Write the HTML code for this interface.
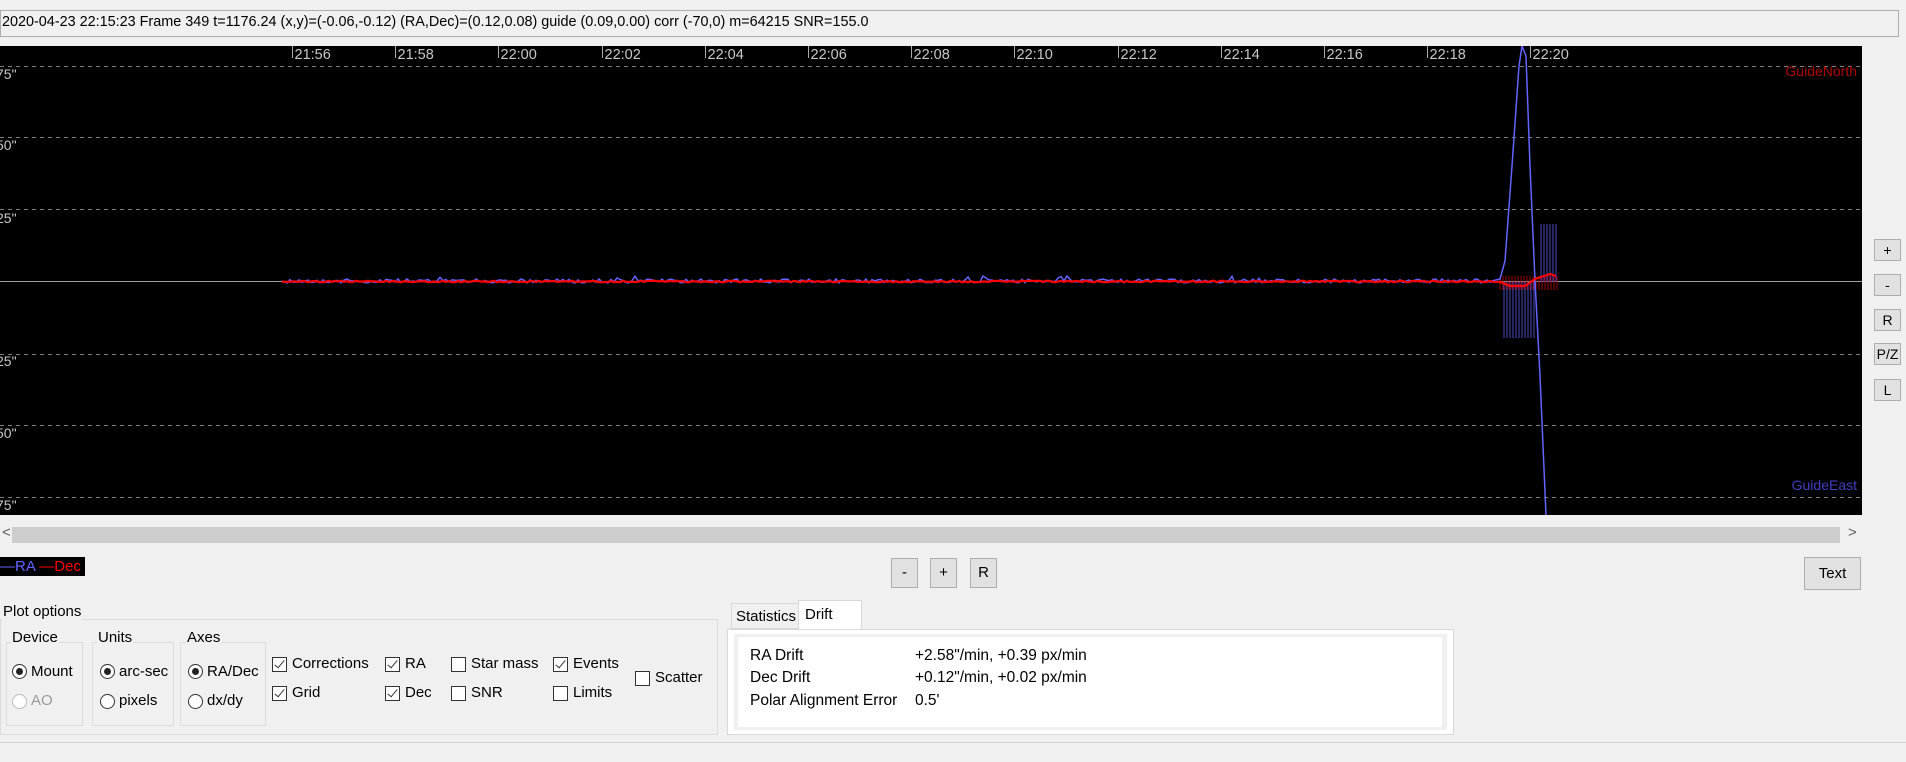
<!DOCTYPE html>
<html><head><meta charset="utf-8"><style>
*{box-sizing:border-box}
body{margin:0;width:1906px;height:762px;background:#f0f0f0;font-family:"Liberation Sans",sans-serif;font-size:15px;color:#000;position:relative;overflow:hidden}
.a{position:absolute;white-space:nowrap}
.btn{position:absolute;background:#e1e1e1;border:1px solid #adadad;text-align:center;font-size:15px}
.gb{position:absolute;border:1px solid #dcdcdc}
.gt{position:absolute;background:#f0f0f0;padding:0 1px;font-size:15px}
.rb{position:absolute;width:15px;height:15px;border:1px solid #333;border-radius:50%;background:#fff}
.rb.on::after{content:"";position:absolute;left:3px;top:3px;width:7px;height:7px;border-radius:50%;background:#222}
.cb{position:absolute;width:15px;height:15px;border:1px solid #333;background:#fff}
.cb.on::after{content:"";position:absolute;left:4px;top:0px;width:4px;height:9px;border:solid #333;border-width:0 1.5px 1.5px 0;transform:rotate(40deg)}
</style></head><body>
<div class="a" style="left:0;top:10px;width:1899px;height:27px;border:1px solid #adadad;background:#f0f0f0"></div>
<div class="a" style="left:2px;top:14px;font-size:14.4px">2020-04-23 22:15:23 Frame 349 t=1176.24 (x,y)=(-0.06,-0.12) (RA,Dec)=(0.12,0.08) guide (0.09,0.00) corr (-70,0) m=64215 SNR=155.0</div>

<svg class="a" style="left:0;top:46px" width="1862" height="469" viewBox="0 0 1862 469">
<rect width="1862" height="469" fill="#000"/>
<g stroke="#808080" stroke-dasharray="4,4" stroke-width="1">
<line x1="0" y1="20.5" x2="1862" y2="20.5"/><line x1="0" y1="91.5" x2="1862" y2="91.5"/><line x1="0" y1="163.5" x2="1862" y2="163.5"/>
<line x1="0" y1="308.5" x2="1862" y2="308.5"/><line x1="0" y1="379.5" x2="1862" y2="379.5"/><line x1="0" y1="451.5" x2="1862" y2="451.5"/>
</g>
<line x1="0" y1="235.5" x2="1862" y2="235.5" stroke="#a0a0a0"/>
<g fill="#c8c8c8" font-family="Liberation Sans" font-size="14">
<text x="-4" y="33">75"</text><text x="-4" y="104">50"</text><text x="-4" y="177">25"</text>
<text x="-4" y="320">25"</text><text x="-4" y="392">50"</text><text x="-4" y="464">75"</text>
</g>
<g id="ticks" stroke="#aaa" fill="#c8c8c8" font-family="Liberation Sans" font-size="14.5"></g>
<text x="1857" y="30" text-anchor="end" fill="#b00000" font-family="Liberation Sans" font-size="14">GuideNorth</text>
<text x="1857" y="444" text-anchor="end" fill="#4040c0" font-family="Liberation Sans" font-size="14">GuideEast</text>
<g id="bars"></g>
<path id="ra" fill="none" stroke="#6464ff" stroke-width="1.5" d="M282 235 L1498 235 L1505 215 L1512 120 L1519 20 L1522 0 L1526 10 L1530 120 L1535 235 L1540 330 L1546 469"/>
<path id="dec" fill="none" stroke="#ff0000" stroke-width="2.2" d="M282 236 L1500 236 L1510 240 L1525 240 L1535 233 L1550 228 L1556 230"/>
</svg>

<div class="a" style="left:0;top:526px;width:1862px;height:17px;background:#f0f0f0"></div>
<div class="a" style="left:12px;top:527px;width:1828px;height:16px;background:#cdcdcd"></div>
<div class="a" style="left:2px;top:524px;color:#606060;font-size:15px">&lt;</div>
<div class="a" style="left:1848px;top:524px;color:#606060;font-size:15px">&gt;</div>

<div class="a" style="left:0;top:557px;width:85px;height:19px;background:#000;font-size:15px;line-height:19px"><span style="color:#6464ff">—RA</span> <span style="color:#ff0000">—Dec</span></div>

<div class="btn" style="left:891px;top:558px;width:27px;height:30px;line-height:28px">-</div>
<div class="btn" style="left:930px;top:558px;width:27px;height:30px;line-height:28px">+</div>
<div class="btn" style="left:970px;top:558px;width:27px;height:30px;line-height:28px">R</div>
<div class="btn" style="left:1804px;top:557px;width:57px;height:33px;line-height:31px">Text</div>

<div class="btn" style="left:1874px;top:239px;width:27px;height:22px;line-height:20px;font-size:14px">+</div>
<div class="btn" style="left:1874px;top:274px;width:27px;height:22px;line-height:20px;font-size:14px">-</div>
<div class="btn" style="left:1874px;top:309px;width:27px;height:22px;line-height:20px;font-size:14px">R</div>
<div class="btn" style="left:1874px;top:343px;width:27px;height:22px;line-height:20px;font-size:14px">P/Z</div>
<div class="btn" style="left:1874px;top:379px;width:27px;height:22px;line-height:20px;font-size:14px">L</div>

<div class="gb" style="left:0;top:619px;width:718px;height:116px"></div>
<div class="gt" style="left:2px;top:603px">Plot options</div>
<div class="gb" style="left:6px;top:642px;width:77px;height:84px"></div><div class="gt" style="left:11px;top:629px">Device</div>
<div class="gb" style="left:92px;top:642px;width:82px;height:84px"></div><div class="gt" style="left:97px;top:629px">Units</div>
<div class="gb" style="left:180px;top:642px;width:86px;height:84px"></div><div class="gt" style="left:186px;top:629px">Axes</div>

<div class="rb on" style="left:12px;top:664px"></div><div class="a" style="left:31px;top:663px">Mount</div>
<div class="rb" style="left:12px;top:694px;border-color:#bbb"></div><div class="a" style="left:31px;top:692px;color:#9a9a9a">AO</div>
<div class="rb on" style="left:100px;top:664px"></div><div class="a" style="left:119px;top:663px">arc-sec</div>
<div class="rb" style="left:100px;top:694px"></div><div class="a" style="left:119px;top:692px">pixels</div>
<div class="rb on" style="left:188px;top:664px"></div><div class="a" style="left:207px;top:663px">RA/Dec</div>
<div class="rb" style="left:188px;top:694px"></div><div class="a" style="left:207px;top:692px">dx/dy</div>

<div class="cb on" style="left:272px;top:657px"></div><div class="a" style="left:292px;top:655px">Corrections</div>
<div class="cb on" style="left:272px;top:686px"></div><div class="a" style="left:292px;top:684px">Grid</div>
<div class="cb on" style="left:385px;top:657px"></div><div class="a" style="left:405px;top:655px">RA</div>
<div class="cb on" style="left:385px;top:686px"></div><div class="a" style="left:405px;top:684px">Dec</div>
<div class="cb" style="left:451px;top:657px"></div><div class="a" style="left:471px;top:655px">Star mass</div>
<div class="cb" style="left:451px;top:686px"></div><div class="a" style="left:471px;top:684px">SNR</div>
<div class="cb on" style="left:553px;top:657px"></div><div class="a" style="left:573px;top:655px">Events</div>
<div class="cb" style="left:553px;top:686px"></div><div class="a" style="left:573px;top:684px">Limits</div>
<div class="cb" style="left:635px;top:671px"></div><div class="a" style="left:655px;top:669px">Scatter</div>

<div class="a" style="left:731px;top:603px;width:68px;height:26px;border:1px solid #d9d9d9;background:#f0f0f0;padding:4px 4px;font-size:15px">Statistics</div>
<div class="a" style="left:798px;top:600px;width:64px;height:30px;border:1px solid #d9d9d9;border-bottom:none;background:#fff;padding:5px 6px;font-size:15px">Drift</div>
<div class="a" style="left:727px;top:629px;width:727px;height:106px;border:1px solid #d9d9d9;background:#fff"></div>
<div class="a" style="left:734px;top:634px;width:713px;height:96px;background:#f0f0f0"></div>
<div class="a" style="left:738px;top:637px;width:704px;height:90px;background:#fff"></div>
<div class="a" style="left:750px;top:647px;font-size:15.5px">RA Drift</div><div class="a" style="left:915px;top:647px;font-size:15.5px">+2.58"/min, +0.39 px/min</div>
<div class="a" style="left:750px;top:669px;font-size:15.5px">Dec Drift</div><div class="a" style="left:915px;top:669px;font-size:15.5px">+0.12"/min, +0.02 px/min</div>
<div class="a" style="left:750px;top:692px;font-size:15.5px">Polar Alignment Error</div><div class="a" style="left:915px;top:692px;font-size:15.5px">0.5'</div>

<div class="a" style="left:0;top:742px;width:1906px;height:1px;background:#d0d0d0"></div>

<script>
(function(){
var ns="http://www.w3.org/2000/svg",t=document.getElementById("ticks");
var lab=["21:56","21:58","22:00","22:02","22:04","22:06","22:08","22:10","22:12","22:14","22:16","22:18","22:20"];
for(var i=0;i<lab.length;i++){var x=Math.round(292+i*103.2)+0.5;
var l=document.createElementNS(ns,"line");l.setAttribute("x1",x);l.setAttribute("x2",x);l.setAttribute("y1",0);l.setAttribute("y2",12);t.appendChild(l);
var tx=document.createElementNS(ns,"text");tx.setAttribute("x",x+2);tx.setAttribute("y",13);tx.setAttribute("stroke","none");tx.textContent=lab[i];t.appendChild(tx);}
var s=12345;function r(){s=(s*1103515245+12345)%2147483648;return s/2147483648;}
var d="M282 235",e="M282 236";
for(var x=284;x<1496;x+=3){d+=" L"+x+" "+(235+(r()-0.5)*4+(r()<0.04?-3:0)).toFixed(1);e+=" L"+x+" "+(235.5+(r()-0.5)*1.5).toFixed(1);}
document.getElementById("ra").setAttribute("d",d+" L1500 233 L1505 215 L1512 120 L1519 20 L1522 0 L1526 10 L1530 120 L1535 235 L1540 330 L1546 469");
document.getElementById("dec").setAttribute("d",e+" L1500 236 L1510 240 L1525 240 L1535 233 L1550 228 L1556 230");
var b=document.getElementById("bars"),h="";
for(var x=1504;x<=1534;x+=3)h+='<line x1="'+x+'" x2="'+x+'" y1="236" y2="292" stroke="#4848c0"/>';
for(var x=1541;x<=1557;x+=3)h+='<line x1="'+x+'" x2="'+x+'" y1="178" y2="236" stroke="#4848c0"/>';
for(var x=1500;x<=1557;x+=3)h+='<line x1="'+x+'" x2="'+x+'" y1="230" y2="244" stroke="#a00000"/>';
b.innerHTML=h;
})();
</script>
</body></html>
